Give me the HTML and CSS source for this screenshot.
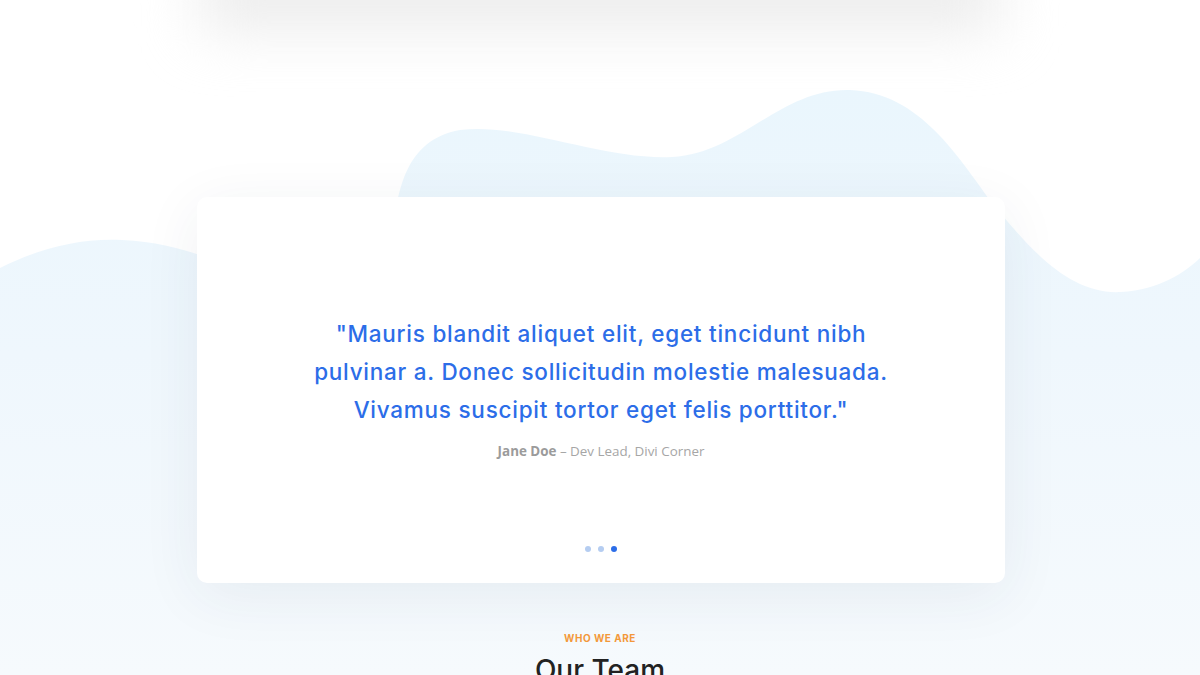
FILE: index.html
```html
<!DOCTYPE html>
<html>
<head>
<meta charset="utf-8">
<link rel="stylesheet" href="styles.css">
</head>
<body>
<div class="page">
  <svg class="waves" width="1200" height="675" viewBox="0 0 1200 675" preserveAspectRatio="none">
    <defs>
      <linearGradient id="wg" x1="0" y1="0" x2="0" y2="1">
        <stop offset="0" stop-color="#eaf6fd"/>
        <stop offset="0.45" stop-color="#eff7fd"/>
        <stop offset="1" stop-color="#f6fafd"/>
      </linearGradient>
    </defs>
    <path fill="url(#wg)" d="M0 268 C40 248 80 238 122 240 C170 242 200 256 240 268 C300 286 370 280 392 235 C398 190 405 140 460 130 C520 122 600 160 672 157 C740 154 780 88 850 90 C920 92 960 160 990 200 C1030 250 1070 295 1121 292 C1160 290 1185 272 1200 258 L1200 675 L0 675 Z"/>
  </svg>
  <div class="prev-card"></div>
  <section class="testimonial">
    <blockquote class="quote">"Mauris blandit aliquet elit, eget tincidunt nibh<br>pulvinar a. Donec sollicitudin molestie malesuada.<br>Vivamus suscipit tortor eget felis porttitor."</blockquote>
    <p class="author"><strong>Jane Doe</strong> – Dev Lead, Divi Corner</p>
    <div class="dots">
      <span class="dot"></span>
      <span class="dot"></span>
      <span class="dot active"></span>
    </div>
  </section>
  <header class="team-head">
    <p class="eyebrow">WHO WE ARE</p>
    <h2 class="title">Our Team</h2>
  </header>
</div>
</body>
</html>
```
FILE: styles.css
```css
html, body {
  margin: 0;
  padding: 0;
  background: #ffffff;
}
.page {
  position: relative;
  width: 1200px;
  height: 675px;
  overflow: hidden;
  display: flex;
  flex-direction: column;
  align-items: center;
}
.waves {
  position: absolute;
  left: 0;
  top: 0;
  z-index: 0;
}
.prev-card {
  position: relative;
  z-index: 1;
  width: 800px;
  height: 70px;
  margin-top: -40px;
  background: #ececec;
  border-radius: 10px;
  filter: blur(28px);
  flex: none;
}
.testimonial {
  position: relative;
  z-index: 2;
  box-sizing: border-box;
  width: 808px;
  height: 386px;
  margin-top: 167px;
  margin-left: 2px;
  padding-top: 118px;
  background: #ffffff;
  border-radius: 10px;
  box-shadow: 0 12px 60px rgba(40, 60, 90, 0.07);
  display: flex;
  flex-direction: column;
  align-items: center;
  flex: none;
}
.quote {
  margin: 0;
  width: 640px;
  font-family: Inter, "Noto Sans", sans-serif;
  font-weight: 500;
  font-size: 22.5px;
  line-height: 38px;
  letter-spacing: 0.75px;
  color: #2c6de8;
  text-align: center;
  white-space: nowrap;
}
.author {
  margin: 12px 0 0;
  font-family: "Open Sans", sans-serif;
  font-size: 13.4px;
  line-height: 20px;
  color: #a6a6a6;
}
.author strong {
  font-weight: 700;
  color: #9b9b9b;
}
.dots {
  margin-top: 85px;
  display: flex;
  gap: 7px;
}
.dot {
  width: 6px;
  height: 6px;
  border-radius: 50%;
  background: #b5cdf1;
}
.dot.active {
  background: #2c6de8;
}
.team-head {
  position: relative;
  z-index: 2;
  margin-top: 48px;
  text-align: center;
}
.eyebrow {
  margin: 0;
  font-family: Inter, "Noto Sans", sans-serif;
  font-weight: 700;
  font-size: 10px;
  line-height: 14px;
  letter-spacing: 0.5px;
  color: #f3983a;
}
.title {
  margin: 8px 0 0;
  font-family: Inter, "Noto Sans", sans-serif;
  font-weight: 500;
  font-size: 28px;
  line-height: 34px;
  color: #222222;
}
```
